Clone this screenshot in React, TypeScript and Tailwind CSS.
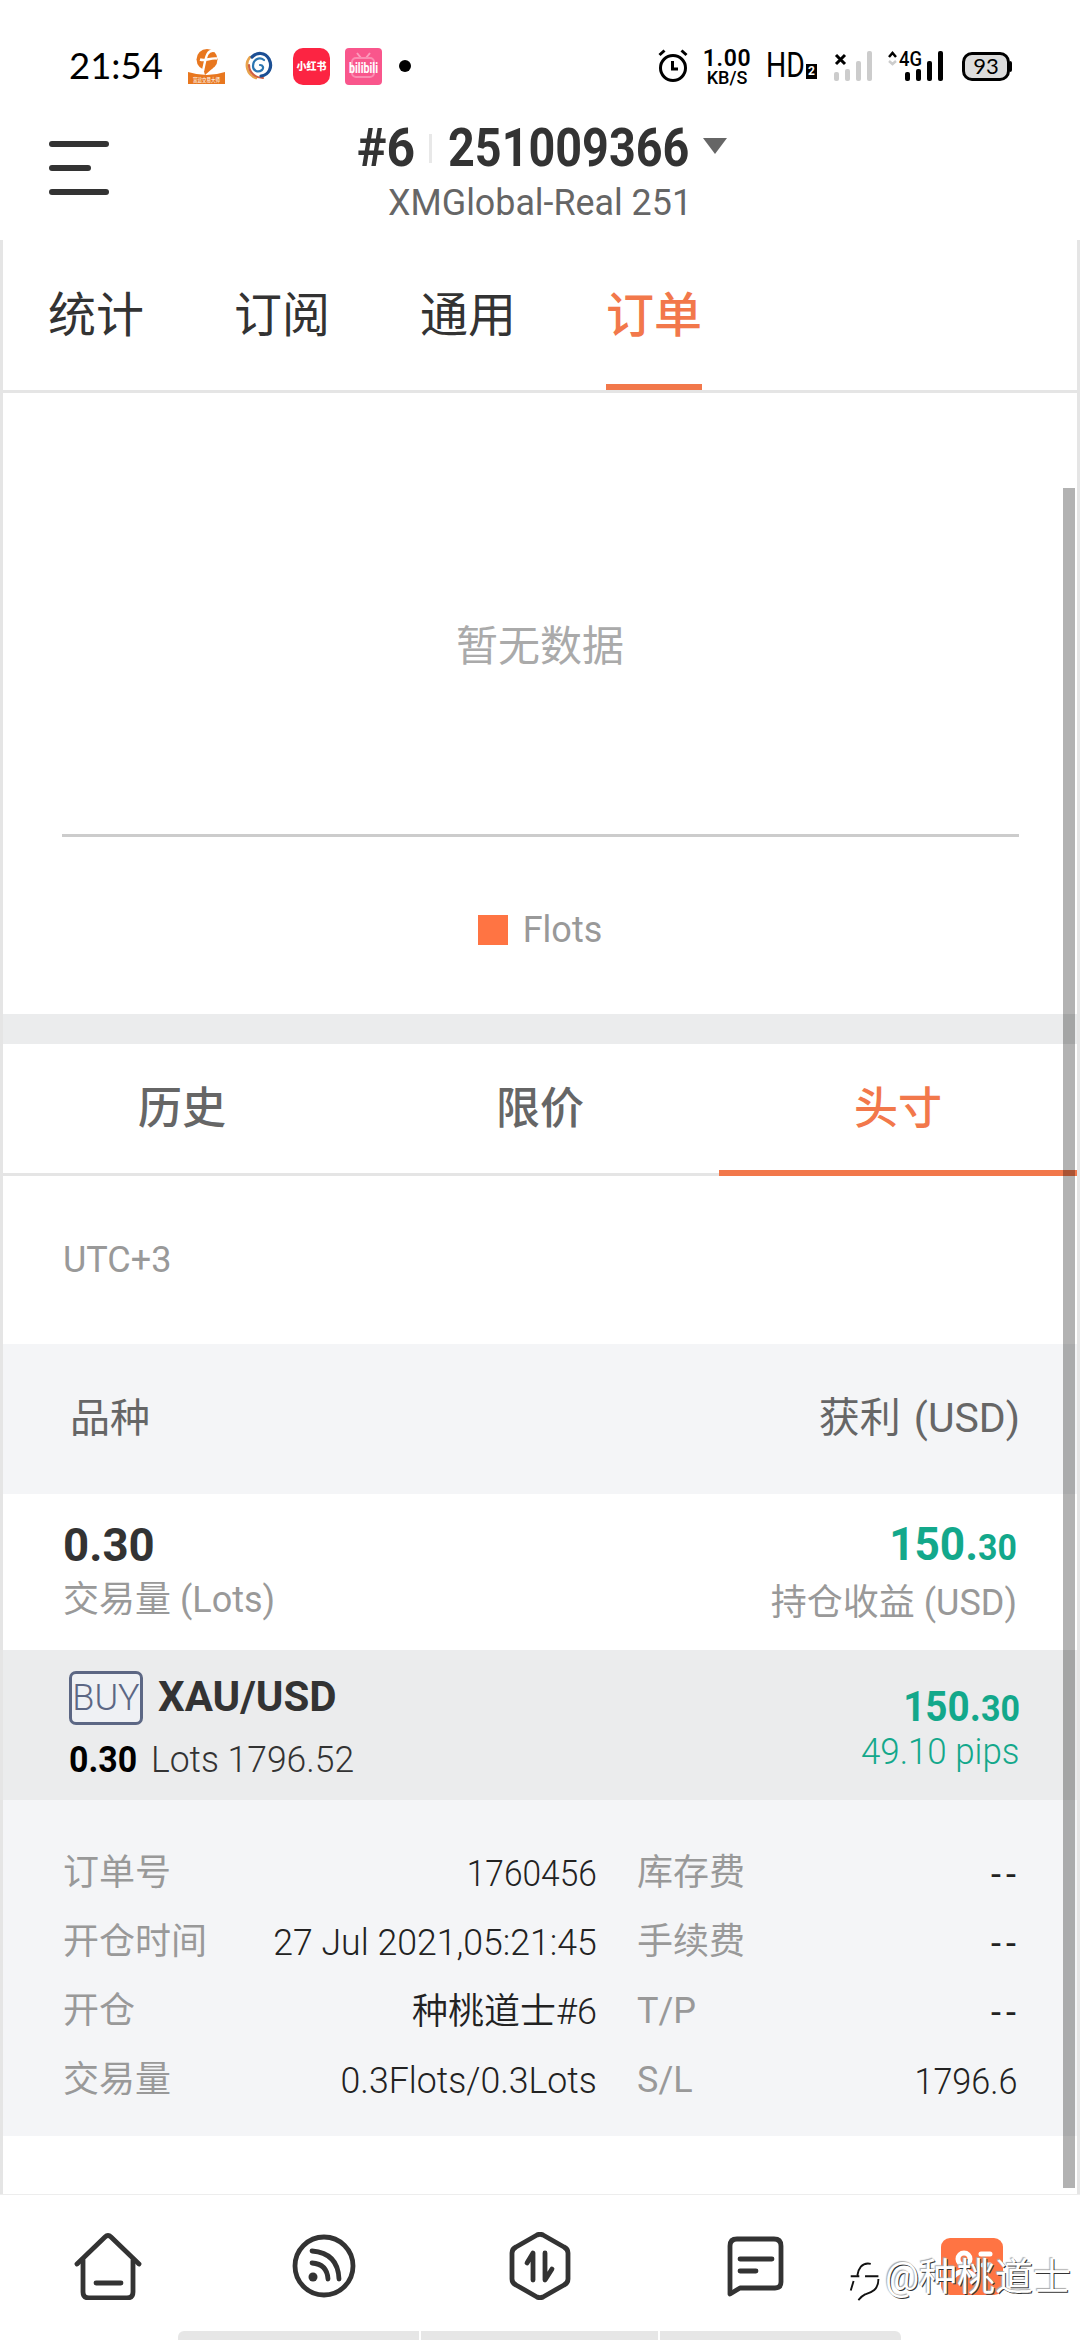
import React, { useState } from 'react';
import clsx from 'clsx';

const details = [
  { label: '订单号', value: '1760456', width: 'scale-x-[0.93]', label2: '库存费', value2: '--' },
  { label: '开仓时间', value: '27 Jul 2021,05:21:45', width: 'scale-x-[0.99]', label2: '手续费', value2: '--' },
  { label: '开仓', value: '种桃道士#6', width: 'scale-x-100', label2: 'T/P', value2: '--' },
  { label: '交易量', value: '0.3Flots/0.3Lots', width: 'scale-x-[0.99]', label2: 'S/L', value2: '1796.6' },
];

const StatusBar = () => (
  <div className="flex h-[120px] items-center pl-[69px] pr-[68px] pt-[12px] text-black">
    <span className="mb-[2px] w-[119px] font-['Lato'] text-[36.5px] leading-[48px]">21:54</span>
    <svg className="h-[38px] w-[38px] overflow-visible" viewBox="0 0 38 38">
      <circle cx="19" cy="12.500" r="10.500" fill="#e8771f" />
      <path d="M15 21l2 7 8-7z" fill="#e8771f" />
      <path d="M27 4c-8-2-9 5-12 20M12 12.500c6 2 10-2 17-1" stroke="#fff" strokeWidth="2.400" fill="none" />
      <path d="M0 25q19 6 37 0v12H0z" fill="#e8771f" />
      <text x="5" y="35" fontSize="6" fill="#fff" textLength="27" lengthAdjust="spacingAndGlyphs" fontFamily="Noto Sans CJK SC, sans-serif">富途交易大师</text>
    </svg>
    <svg className="ml-[19px] h-[30px] w-[28px]" viewBox="0 0 28 30" fill="none" strokeLinecap="round">
      <path d="M5 6C-1 13 2 24 11 27" stroke="#e8a34c" strokeWidth="2.500" />
      <path d="M4 14c0 8 7 13 14 13" stroke="#cf5f42" strokeWidth="2.200" />
      <path d="M7 6C12 1 20 1 24 8c4 8 0 16-8 17" stroke="#1c4f94" strokeWidth="3.200" />
      <path d="M19 9C14 5 8 9 8 15c0 5 5 7 9 4 2-2 1-5-2-5" stroke="#2b75b0" strokeWidth="2.200" />
    </svg>
    <div className="ml-[20px] flex h-[37px] w-[37px] items-center justify-center rounded-[10px] bg-[#fc2442]">
      <span className="whitespace-nowrap font-['Noto_Sans_CJK_SC'] text-[10px] font-black leading-[20px] text-white">小红书</span>
    </div>
    <svg className="ml-[15px] h-[37px] w-[37px] overflow-visible" viewBox="0 0 37 37">
      <rect width="37" height="37" rx="4" fill="#f9568c" />
      <path d="M12 5l4 5M25 5l-4 5" stroke="#fb9cbd" strokeWidth="2" />
      <rect x="7" y="10" width="22" height="19" rx="4" fill="none" stroke="#fb8bb1" strokeWidth="2" />
      <text x="4" y="25" fontSize="14" fontWeight="700" fill="#fff" textLength="29" lengthAdjust="spacingAndGlyphs" fontFamily="Roboto, sans-serif">bilibili</text>
    </svg>
    <div className="ml-[17px] h-[12px] w-[12px] rounded-full bg-black" />

    <svg className="ml-auto h-[34px] w-[30px]" viewBox="0 0 30 34" fill="none" stroke="#000">
      <circle cx="15" cy="19" r="12.500" strokeWidth="3" />
      <path d="M14.500 12v8H20" strokeWidth="3" />
      <path d="M1.500 6l5-4.500M28.500 6l-5-4.500" strokeWidth="3" />
    </svg>
    <div className="ml-[15px] mt-[2px] flex w-[48px] flex-col items-center font-['Roboto']">
      <span className="text-[23px] font-semibold leading-[21px] tracking-[0.6px]">1.00</span>
      <span className="text-[18px] font-medium leading-[18px]">KB/S</span>
    </div>
    <div className="ml-[15px] mb-[1px] flex items-end">
      <span className="w-[40px] font-['Roboto'] text-[35px] leading-[34px]">
        <span className="inline-block origin-left scale-x-[0.81]">HD</span>
      </span>
      <span className="mb-[4px] flex h-[15px] w-[11px] items-center justify-center bg-black font-['Roboto'] text-[12px] font-bold leading-[15px] text-white">2</span>
    </div>
    <svg className="ml-[17px] h-[32px] w-[39px]" viewBox="0 0 39 32">
      <path d="M2 5l9 9M11 5l-9 9" stroke="#000" strokeWidth="3" />
      <g fill="#ccc">
        <rect x="0" y="22" width="5" height="9" rx="2" />
        <rect x="11" y="19" width="5" height="12" rx="2" />
        <rect x="22" y="11" width="5" height="20" rx="2" />
        <rect x="33" y="1" width="5" height="30" rx="2" />
      </g>
    </svg>
    <svg className="ml-[14px] h-[32px] w-[57px] overflow-visible" viewBox="0 0 57 32">
      <path d="M2 7l3.500-4L9 7" stroke="#000" strokeWidth="2.500" fill="none" />
      <path d="M2 11l3.500 3L9 11" stroke="#ccc" strokeWidth="2.500" fill="none" />
      <text x="12" y="16" fontSize="21" fontWeight="500" fontFamily="Roboto, sans-serif" textLength="23" lengthAdjust="spacingAndGlyphs">4G</text>
      <rect x="18" y="22" width="5" height="9" rx="2" />
      <rect x="29" y="19" width="5" height="12" rx="2" />
      <rect x="40" y="11" width="5" height="20" rx="2" />
      <rect x="51" y="1" width="5" height="30" rx="2" />
    </svg>
    <div className="ml-[18px] flex h-[29px] w-[50px] items-center">
      <div className="flex h-[29px] w-[48px] items-center justify-center rounded-[10px] border-[3px] border-black bg-[#dcdcdc] font-['Lato'] text-[22px] leading-[22px]">
        93
      </div>
      <div className="h-[11px] w-[2px] rounded-r bg-black" />
    </div>
  </div>
);

const Header = () => (
  <div className="flex h-[120px] pl-[49px]">
    <div className="mt-[21px] flex w-[60px] flex-col gap-[18px]">
      <div className="h-[6px] w-[60px] rounded-full bg-[#333]" />
      <div className="h-[6px] w-[42px] rounded-full bg-[#333]" />
      <div className="h-[6px] w-[60px] rounded-full bg-[#333]" />
    </div>
    <div className="ml-[248px] w-[400px] font-['Roboto']">
      <div className="flex h-[56px] items-center text-[53px] font-bold leading-none text-[#333]">
        <span className="w-[72px]"><span className="inline-block origin-left scale-x-[0.94]">#6</span></span>
        <span className="h-[29px] w-[3px] bg-[#e8e8e8]" />
        <span className="ml-[16px] w-[255px]"><span className="inline-block origin-left scale-x-[0.882]">251009366</span></span>
        <svg className="mb-[4px] h-[16px] w-[24px]" viewBox="0 0 24 16">
          <path d="M0 0h24L12 16z" fill="#666" />
        </svg>
      </div>
      <div className="ml-[31px] mt-[5px] text-[36px] font-[450] leading-[44px] text-[#666]">
        <span className="inline-block origin-left scale-x-[0.995]">XMGlobal-Real 251</span>
      </div>
    </div>
  </div>
);

const MainTabs = () => {
  const [active, setActive] = useState('订单');
  return (
    <div className="flex h-[153px] gap-[90px] border-b-[3px] border-[#e5e5e5] pl-[45px] text-[48px]">
      {['统计', '订阅', '通用', '订单'].map((tab) => (
        <button
          key={tab}
          onClick={() => setActive(tab)}
          className={clsx(
            'h-[150px] w-[96px] border-b-[6px] pt-[8px] whitespace-nowrap',
            active === tab ? 'border-[#f2784b] font-medium text-[#f2784b]' : 'border-transparent text-[#333]'
          )}
        >
          {tab}
        </button>
      ))}
    </div>
  );
};

const Chart = () => (
  <div className="flex h-[621px] flex-col items-center">
    <div className="flex h-[441px] items-center pt-[66px] text-[42px] text-[#aaa]">暂无数据</div>
    <div className="h-[3px] w-[957px] bg-[#ccc]" />
    <div className="mt-[72px] flex h-[42px] items-center gap-[15px] text-[36px] text-[#999]">
      <div className="h-[30px] w-[30px] bg-[#ff7443]" />
      <span>Flots</span>
    </div>
  </div>
);

const OrderTabs = () => {
  const [active, setActive] = useState('头寸');
  return (
    <div className="grid h-[132px] grid-cols-3 text-[44px] font-medium">
      {['历史', '限价', '头寸'].map((tab) => (
        <button
          key={tab}
          onClick={() => setActive(tab)}
          className={clsx(
            'flex items-center justify-center',
            active === tab ? 'border-b-[6px] border-[#f2784b] pt-[4px] text-[#f2784b]' : 'border-b-[3px] border-[#e5e5e5] pt-px text-[#666]'
          )}
        >
          {tab}
        </button>
      ))}
    </div>
  );
};

const Position = () => (
  <>
    <div className="flex h-[168px] items-center pl-[60px] text-[36px] text-[#999]">
      <span>UTC+3</span>
    </div>
    <div className="flex h-[150px] items-center justify-between bg-[#f4f5f7] pl-[67px] pr-[57px] text-[40px] text-[#666]">
      <span>品种</span>
      <span className="text-[41px] [word-spacing:3px]">获利 (USD)</span>
    </div>

    <div className="flex h-[156px] justify-between pl-[60px] pr-[60px] pt-[26px] text-[36px] text-[#999]">
      <div>
        <div className="h-[50px] text-[47px] font-bold leading-[50px] text-[#333]">
          <span className="inline-block origin-left scale-x-[0.97]">0.30</span>
        </div>
        <div className="leading-[60px]">交易量 (Lots)</div>
      </div>
      <div className="text-right">
        <div className="h-[50px] text-[47px] font-bold leading-[48px] text-[#13a88b]">
          <span className="inline-block origin-right scale-x-[0.94]">150.<span className="text-[36px]">30</span></span>
        </div>
        <div className="leading-[66px]">持仓收益 (USD)</div>
      </div>
    </div>

    <div className="flex h-[150px] justify-between bg-[#ebeced] pl-[66px] pr-[57px]">
      <div>
        <div className="mt-[21px] flex h-[54px] items-center">
          <div className="flex h-[54px] w-[74px] items-center justify-center rounded-[7px] border-[3px] border-[#5c6784] bg-[#eff1f4] text-[36px] font-[350] text-[#5c6784]">
            <span className="inline-block">BUY</span>
          </div>
          <span className="mb-[2px] ml-[15px] text-[42px] font-bold leading-none text-[#333]">XAU/USD</span>
        </div>
        <div className="mt-[13px] flex text-[36px] leading-[44px] text-[#333]">
          <span className="w-[82px] font-bold text-black">
            <span className="inline-block origin-left scale-x-[0.94]">0.30</span>
          </span>
          <span className="inline-block origin-left scale-x-[0.985] font-[350]">Lots 1796.52</span>
        </div>
      </div>
      <div className="pt-[34px] text-right text-[#13a88b]">
        <div className="text-[42px] font-bold leading-[46px]">
          <span className="inline-block origin-right scale-x-[0.92]">150.<span className="text-[37px]">30</span></span>
        </div>
        <div className="text-[36px] font-[350] leading-[40px]">
          <span className="inline-block origin-right scale-x-[0.97]">49.10 pips</span>
        </div>
      </div>
    </div>

    <div className="h-[336px] bg-[#f4f5f7] pl-[60px] pr-[60px] pt-[38px] text-[36px]">
      {details.map((row) => (
        <div key={row.label} className="flex h-[69px] items-center leading-[69px]">
          <span className="pt-[2px] text-[#999]">{row.label}</span>
          <span className={clsx('ml-auto origin-right pt-[4px] font-[350] whitespace-nowrap text-[#222]', row.width)}>{row.value}</span>
          <div className="ml-[40px] flex w-[380px] justify-between">
            <span className="pt-[3px] text-[#999]">{row.label2}</span>
            {row.value2 === '--' ? (
              <span className="mr-[-4px] pt-[5px] tracking-[5px] text-[#222]">--</span>
            ) : (
              <span className="origin-right scale-x-[0.95] pt-[5px] font-[350] text-[#222]">{row.value2}</span>
            )}
          </div>
        </div>
      ))}
    </div>
  </>
);

const BottomNav = () => (
  <div className="relative grid h-[137px] grid-cols-5 items-center justify-items-center pb-[12px]">
    <svg className="h-[68px] w-[68px]" viewBox="0 0 68 68" fill="none" stroke="#333" strokeWidth="4.800" strokeLinecap="round" strokeLinejoin="round">
      <path d="M3 32L31 5q3-3 6 0l28 27" />
      <path d="M9 28v32q0 6 6 6h38q6 0 6-6V28" />
      <path d="M22 51h25" />
    </svg>
    <svg className="h-[64px] w-[64px]" viewBox="0 0 64 64" fill="none" stroke="#333" strokeWidth="4.800" strokeLinecap="round">
      <circle cx="32" cy="32" r="29" />
      <path d="M20 17q26 2 27 28M20 29q15 1 16 16" />
      <circle cx="21" cy="43" r="4.500" fill="#333" stroke="none" />
    </svg>
    <svg className="h-[68px] w-[64px]" viewBox="0 0 64 68" fill="none" stroke="#333" strokeWidth="4.800" strokeLinecap="round" strokeLinejoin="round">
      <path d="M29 3q3-1.500 6 0l21 12q4 2 4 6v26q0 4-4 6L35 65q-3 1.500-6 0L8 53q-4-2-4-6V21q0-4 4-6z" />
      <path d="M19 31l6-10v27M37 21v27l7-11" />
    </svg>
    <svg className="h-[64px] w-[60px]" viewBox="0 0 60 64" fill="none" stroke="#333" strokeWidth="4.800" strokeLinecap="round" strokeLinejoin="round">
      <path d="M4 60V12q0-7 7-7h37q7 0 7 7v36q0 6-6 6H14z" />
      <path d="M14 25h32M14 37h16" />
    </svg>
    <svg className="h-[64px] w-[64px]" viewBox="0 0 64 64" fill="none" stroke="#fff" strokeWidth="5" strokeLinecap="round">
      <rect x="1" y="4" width="62" height="57" rx="9" fill="#ff7443" stroke="none" />
      <circle cx="24" cy="25" r="6" />
      <path d="M14 42q10-10 20 0M41 20h9M43 31h7" />
    </svg>

    <div className="absolute right-[9px] top-[49px] flex items-center text-[38px] leading-[50px] whitespace-nowrap text-white [text-shadow:1px_1px_0_#333,-1px_-1px_1px_#aaa]">
      <svg className="mr-[2px] mt-[8px] h-[42px] w-[34px]" viewBox="0 0 34 44" fill="none" stroke="#111" strokeWidth="2">
        <path d="M22 4C12 2 9 10 8 16M1 17h9M16 17h14M4 22L1 32M30 20c0 12-8 14-14 16-4 2-6 5-7 6" />
      </svg>
      <span>@种桃道士</span>
    </div>

    {/* gesture hint */}
    <div className="absolute bottom-0 left-[178px] flex h-[9px] gap-[2px]">
      <div className="w-[241px] rounded-tl-[6px] bg-[#e6e6e6]" />
      <div className="w-[237px] bg-[#e6e6e6]" />
      <div className="w-[241px] rounded-tr-[6px] bg-[#e6e6e6]" />
    </div>
  </div>
);

export default function App() {
  return (
    <div className="h-[2340px] w-[1080px] overflow-hidden bg-white font-['Roboto','Noto_Sans_CJK_SC',sans-serif]">
      <StatusBar />
      <Header />
      <div className="relative h-[1954px] border-x-[3px] border-[#e5e5e5]">
        <MainTabs />
        <Chart />
        <div className="h-[30px] bg-[#ebeced]" />
        <OrderTabs />
        <Position />
        <div className="absolute right-[2px] top-[248px] h-[1700px] w-[12px] bg-black/30" />
      </div>
      <div className="h-[1px] bg-[#ededed]" />
      <div className="h-[8px]" />
      <BottomNav />
    </div>
  );
}
